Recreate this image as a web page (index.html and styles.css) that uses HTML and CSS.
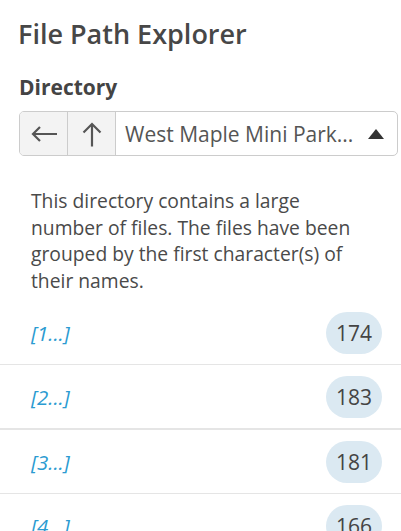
FILE: index.html
```html
<!DOCTYPE html>
<html>
<head>
<meta charset="utf-8">
<link rel="stylesheet" href="styles.css">
</head>
<body>
<div class="app">
  <h1 class="title">File Path Explorer</h1>
  <label class="label">Directory</label>
  <div class="picker">
    <button class="nav-btn" aria-label="Back">
      <svg width="28" height="18" viewBox="0 0 28 18"><path d="M27 9H3M10 2L3 9l7 7" fill="none" stroke="#555" stroke-width="2.2"/></svg>
    </button>
    <button class="nav-btn" aria-label="Up">
      <svg width="22" height="26" viewBox="0 0 22 26"><path d="M11 25.5V3M2.5 11.5L11 3l8.5 8.5" fill="none" stroke="#555" stroke-width="2.2"/></svg>
    </button>
    <div class="select">
      <span class="select-text">West Maple Mini Park...</span>
      <span class="caret"></span>
    </div>
  </div>
  <div class="scroller">
    <p class="note">This directory contains a large number of files. The files have been grouped by the first character(s) of their names.</p>
    <ul class="groups">
      <li class="group"><a class="group-name">[1...]</a><span class="badge">174</span></li>
      <li class="group"><a class="group-name">[2...]</a><span class="badge">183</span></li>
      <li class="group thick"><a class="group-name">[3...]</a><span class="badge">181</span></li>
      <li class="group"><a class="group-name">[4...]</a><span class="badge">166</span></li>
      <li class="group"><a class="group-name">[5...]</a><span class="badge">172</span></li>
      <li class="group"><a class="group-name">[6...]</a><span class="badge">159</span></li>
      <li class="group"><a class="group-name">[7...]</a><span class="badge">168</span></li>
    </ul>
  </div>
</div>
</body>
</html>
```
FILE: styles.css
```css
html, body {
  margin: 0;
  padding: 0;
  background: #fff;
}
body {
  font-family: "Open Sans", "Liberation Sans", sans-serif;
  color: #444;
  overflow: hidden;
}
.app {
  height: 531px;
  display: flex;
  flex-direction: column;
}
.title {
  margin: 0;
  padding: 15px 18px 0;
  font-size: 27px;
  font-weight: 600;
  line-height: 37px;
  color: #474747;
}
.label {
  display: block;
  padding: 21px 19px 0;
  font-size: 21px;
  font-weight: 700;
  line-height: 28px;
  color: #444;
}
.picker {
  margin: 10px 3px 0 19px;
  height: 45px;
  box-sizing: border-box;
  display: flex;
  border: 1px solid #ccc;
  border-radius: 5px;
  overflow: hidden;
  flex: none;
}
.nav-btn {
  width: 48px;
  border: none;
  border-right: 1px solid #ccc;
  background: #f3f3f3;
  display: flex;
  align-items: center;
  justify-content: center;
  padding: 0;
}
.select {
  flex: 1;
  display: flex;
  align-items: center;
  justify-content: space-between;
  padding: 0 13px 0 9px;
  font-size: 21px;
}
.select-text {
  color: #555;
}
.caret {
  width: 0;
  height: 0;
  border-left: 8.5px solid transparent;
  border-right: 8.5px solid transparent;
  border-bottom: 10px solid #333;
}
.scroller {
  margin-top: 25px;
  flex: 1;
  overflow-y: scroll;
}
.scroller::-webkit-scrollbar {
  width: 3px;
}
.scroller::-webkit-scrollbar-track {
  background: #f1f1f1;
}
.scroller::-webkit-scrollbar-thumb {
  background: #bdbdbd;
}
.scroller::-webkit-scrollbar-button:single-button:vertical:decrement {
  display: block;
  height: 25px;
  background: #f1f1f1;
}
.note {
  margin: 0;
  padding: 7px 37px 0 31px;
  font-size: 19.3px;
  line-height: 26.6px;
  color: #4a4a4a;
}
.groups {
  list-style: none;
  margin: 7px 0 0;
  padding: 0;
}
.group {
  display: flex;
  align-items: center;
  justify-content: space-between;
  padding: 10.5px 19px 10.5px 31px;
  border-bottom: 1px solid #e5e5e5;
}
.group.thick {
  border-top: 1px solid #e5e5e5;
}
.group-name {
  font-style: italic;
  font-size: 20.5px;
  color: #2b9bd1;
}
.badge {
  height: 42px;
  min-width: 55px;
  box-sizing: border-box;
  padding: 0 10px;
  border-radius: 21px;
  background: #dbe9f2;
  display: flex;
  align-items: center;
  justify-content: center;
  font-size: 21px;
  color: #444;
}
```
